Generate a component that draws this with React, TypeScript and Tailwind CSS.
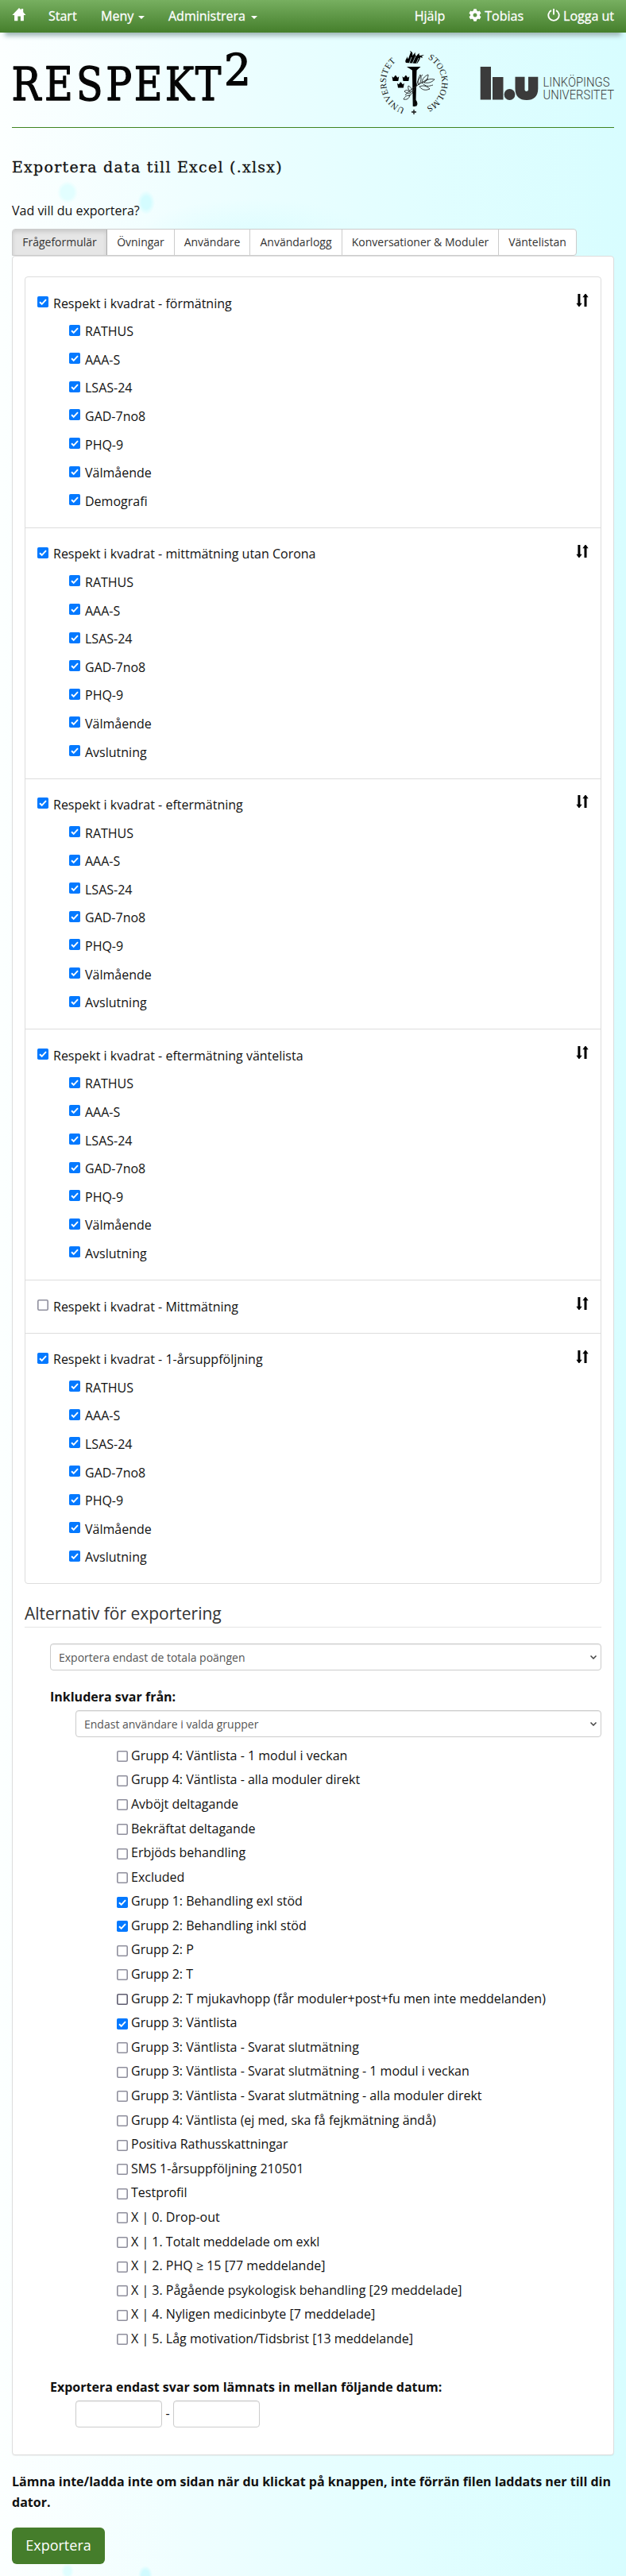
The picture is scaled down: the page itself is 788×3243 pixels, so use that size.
import React from "react";
import { FaCog } from "react-icons/fa";

function Box({ on, dark }: { on?: boolean; dark?: boolean }) {
  return (
    <svg role="checkbox" aria-checked={!!on} width="14" height="14" viewBox="0 0 14 14" className="block shrink-0">
      {on ? (
        <>
          <rect width="14" height="14" rx="1.8" fill="#0479ff" />
          <path d="M3 7.2l2.7 2.6L11 4.2" fill="none" stroke="#fff" strokeWidth="1.9" />
        </>
      ) : (
        <rect x="0.8" y="0.8" width="12.4" height="12.4" rx="1.4" fill="#fff" stroke={dark ? "#5f5d70" : "#8f8f9d"} strokeWidth="1.6" />
      )}
    </svg>
  );
}

function SortIcon() {
  return (
    <svg width="16" height="16" viewBox="0 0 16 16" fill="#000" className="block">
      <path d="M2.4 0h3v11.700h2.300L4.400 16h-1L.4 11.700h2zM10.500 16h3V4.300h2.200L12.500 0h-1L8.300 4.300h2.200z" />
    </svg>
  );
}

const base = ["RATHUS", "AAA-S", "LSAS-24", "GAD-7no8", "PHQ-9", "Välmående"];
const sections = [
  { name: "förmätning", items: [...base, "Demografi"] },
  { name: "mittmätning utan Corona", items: [...base, "Avslutning"] },
  { name: "eftermätning", items: [...base, "Avslutning"] },
  { name: "eftermätning väntelista", items: [...base, "Avslutning"] },
  { name: "Mittmätning", items: [] as string[] },
  { name: "1-årsuppföljning", items: [...base, "Avslutning"] },
];

const groups: [string, boolean?][] = [
  ["Grupp 4: Väntlista - 1 modul i veckan"],
  ["Grupp 4: Väntlista - alla moduler direkt"],
  ["Avböjt deltagande"],
  ["Bekräftat deltagande"],
  ["Erbjöds behandling"],
  ["Excluded"],
  ["Grupp 1: Behandling exl stöd", true],
  ["Grupp 2: Behandling inkl stöd", true],
  ["Grupp 2: P"],
  ["Grupp 2: T"],
  ["Grupp 2: T mjukavhopp (får moduler+post+fu men inte meddelanden)"],
  ["Grupp 3: Väntlista", true],
  ["Grupp 3: Väntlista - Svarat slutmätning"],
  ["Grupp 3: Väntlista - Svarat slutmätning - 1 modul i veckan"],
  ["Grupp 3: Väntlista - Svarat slutmätning - alla moduler direkt"],
  ["Grupp 4: Väntlista (ej med, ska få fejkmätning ändå)"],
  ["Positiva Rathusskattningar"],
  ["SMS 1-årsuppföljning 210501"],
  ["Testprofil"],
  ["X | 0. Drop-out"],
  ["X | 1. Totalt meddelade om exkl"],
  ["X | 2. PHQ ≥ 15 [77 meddelande]"],
  ["X | 3. Pågående psykologisk behandling [29 meddelade]"],
  ["X | 4. Nyligen medicinbyte [7 meddelade]"],
  ["X | 5. Låg motivation/Tidsbrist [13 meddelande]"],
];

function Navbar() {
  return (
    <nav className="flex h-[41px] items-center bg-linear-to-b from-[#77af60] to-[#457f2b] pl-[15px] text-[16px] leading-[25px] text-white shadow-[0_10px_6px_-6px_#9db5b5] [-webkit-text-stroke:0.3px_white]">
      <svg width="18" height="17" viewBox="0 0 18 17" fill="#fff" className="mt-[-4px]">
        <path d="M9 0l2.6 2.6V1h2.6v4.2L17.5 9h-2.6v7.3h-4V10.5H7.4v5.8H3.1V9H.4z" />
      </svg>
      <span className="ml-[28px] w-[66px]">Start</span>
      <span className="flex w-[85px] items-center">Meny<i className="ml-[6px] mt-[3px] border-x-4 border-t-4 border-x-transparent border-t-white" /></span>
      <span className="flex items-center">Administrera<i className="ml-[7px] mt-[3px] border-x-4 border-t-4 border-x-transparent border-t-white" /></span>
      <div className="ml-auto flex items-center pr-[15px]">
        <span className="mr-[30px]">Hjälp</span>
        <span className="mr-[30px] flex items-center"><FaCog size={16} className="mr-[4px] mt-[-3px]" />Tobias</span>
        <span className="flex items-center">
          <svg width="16" height="16" viewBox="0 0 16 16" fill="none" stroke="#fff" strokeWidth="1.9" className="mr-[4px] mt-[-3px]">
            <path d="M5 2.2a6.7 6.7 0 1 0 6 0M8 0v7.5" />
          </svg>
          Logga ut
        </span>
      </div>
    </nav>
  );
}

function Crown({ x, y }: { x: number; y: number }) {
  return (
    <path transform={`translate(${x} ${y})`} d="M0 1.2l2 1.5L3.9 0h.9l2 2.7 2-1.5-1 5.8H1z" fill="#000" />
  );
}

function Seal() {
  return (
    <svg width="96" height="106" viewBox="473 52 96 106" className="-mx-[5px] -mt-[11px]">
      <defs>
        <path id="arcL" d="M509.5 137.5A34.5 34.5 0 0 1 503 75" />
        <path id="arcR" d="M538.5 74.7A34.5 34.5 0 0 1 531 138" />
      </defs>
      <g fontFamily="'Liberation Serif', serif" fontSize="11" fill="#111">
        <text><textPath href="#arcL" textLength="73" lengthAdjust="spacing">UNIVERSITET</textPath></text>
        <text><textPath href="#arcR" textLength="75" lengthAdjust="spacing">STOCKHOLMS</textPath></text>
      </g>
      <path d="M512 85h17.500l-5 4.500-1.200 45.500h-3.600l-.8-45.500z" fill="#000" />
      <path d="M511 80c-2-3 1-5 2-8 0 2 0 3 1 3 1-3 2-6 3-8 0-1-1-1-1-2 3 1 4 3 3 6 2-1 2-3 4-4-1 2 0 4 1 5 1-2 2-3 4-4-1 2 0 3 1 3l5-1-3 2 1 2-3-1c0 3-2 5-4 8z" fill="#000" />
      <path d="M515 81l3-8M519 81l4-9M524 81l3-7" stroke="#dff" strokeWidth=".7" />
      <Crown x={493.500} y={96} />
      <Crown x={506.500} y={96} />
      <Crown x={500} y={104.500} />
      <g fill="none" stroke="#222" strokeWidth=".9">
        <path d="M510 121c6-8 18-14 29-21M514 122c4-2 7-5 9-12M524 110c1-6 3-10 8-15M527 108c-2-5 0-9 2-13 2 5 1 9-2 13zM531 106c0-5 3-9 8-11 0 5-3 9-8 11zM534 105c4-5 9-5 13-4-4 4-8 5-13 4zM528 110c4 5 8 5 13 3-4-4-8-5-13-3zM533 107c5 4 8 2 12 1M509 116c3-3 6-1 8 2-4 1-6 0-8-2zM508 126c2-4 4-5 8-5-1 4-4 6-8 5zM514 109c4 2 5 5 5 8-4-1-6-4-5-8z" />
      </g>
      <path d="M521 126c3 1 5 5 3 8-3-1-3-4-3-8M521 139v6M518 142h6" stroke="#111" strokeWidth="1.3" />
    </svg>
  );
}

function LiuLogo() {
  return (
    <svg width="180" height="64" viewBox="604 73 180 64">
      <g fill="#3b3b3b">
        <path d="M604.7 84H618v41.500h-13.300zM620 97h13.500v28.500H620z" />
        <circle cx="641.500" cy="119" r="6.900" />
        <path d="M648.500 96.700h12v16.500a2.300 2.300 0 0 0 4.500 0V96.700h12.300v15c0 9.500-5.500 14.300-14.400 14.300s-14.400-4.800-14.400-14.300z" />
        <g fontFamily="Roboto, sans-serif" fontWeight="300" fontSize="17">
          <text x="683.500" y="109" textLength="84" lengthAdjust="spacingAndGlyphs">LINKÖPINGS</text>
          <text x="683.500" y="125.300" textLength="89.500" lengthAdjust="spacingAndGlyphs">UNIVERSITET</text>
        </g>
      </g>
    </svg>
  );
}

function Wordmark() {
  return (
    <svg
      width="330"
      height="108"
      viewBox="10 42 330 108"
      fontFamily="'DejaVu Serif', serif"
      fill="#050505"
      stroke="#050505"
      strokeWidth="1.300"
      strokeLinejoin="round"
      className="-ml-[5px] -mt-[21px]"
    >
      <text transform="scale(.86 1)" x="17 65 111.500 155 196.300 241.500 285.700" y="127" fontSize="57">RESPEKT</text>
      <text transform="translate(282 107.500) scale(.97 1)" fontSize="55">2</text>
    </svg>
  );
}

function Select({ children }: { children: React.ReactNode }) {
  return (
    <div className="flex h-[34px] items-center justify-between rounded-[4px] border border-[#ccc] bg-white pl-[10px] pr-[5px] text-[14px] text-[#555] shadow-[inset_0_1px_1px_rgba(0,0,0,0.075)]">
      <span>{children}</span>
      <svg width="8" height="5" viewBox="0 0 8 5" fill="none" stroke="#444" strokeWidth="1.500"><path d="M.5.5L4 4 7.500.5" /></svg>
    </div>
  );
}

const tab = "flex items-center justify-center border-r border-[#ccc]";

export default function App() {
  return (
    <div className="h-[3243px] overflow-hidden bg-[#f0ffff] bg-[radial-gradient(13px_14px_at_85px_242px,#e2feff_60%,transparent_100%),radial-gradient(11px_15px_at_184px_255px,#d4fcff_50%,transparent_100%),radial-gradient(8px_10px_at_85px_3237px,#e0feff_50%,transparent_100%),radial-gradient(9px_12px_at_183px_3242px,#d0fbff_50%,transparent_100%),radial-gradient(150px_50px_at_320px_300px,#ddfdff,transparent),linear-gradient(90deg,#fcffff_0%,#effeff_30%,#e2feff_65%,#d8fdff_100%)] font-['Open_Sans','Noto_Sans',sans-serif] text-[16px] leading-[25.6px] text-[#111]">
      <Navbar />
      <div className="px-[15px]">
        <header className="flex h-[120px] justify-between border-b border-[#3f8420] pt-[21px]">
          <div className="w-[303px]"><Wordmark /></div>
          <div className="flex">
            <div className="w-[86px]"><Seal /></div>
            <div className="ml-[40px] mt-[11px] w-[169px]"><LiuLogo /></div>
          </div>
        </header>
        <h1 className="mt-[34px] h-[31px] whitespace-nowrap font-['DejaVu_Serif',serif] text-[19px] leading-[30px] tracking-[1.25px] [-webkit-text-stroke:0.3px_#111]">Exportera data till Excel (.xlsx)</h1>
        <p className="mt-[27px] h-[35px]">Vad vill du exportera?</p>
        <div className="flex h-[34px] w-[711px] rounded-t-[4px] rounded-br-[4px] border border-[#ccc] bg-white text-[14px] text-[#333]">
          <div className="flex w-[119px] items-center justify-center rounded-tl-[3px] border-r border-[#adadad] bg-[#e6e6e6] shadow-[inset_0_3px_5px_rgba(0,0,0,0.125)]">Frågeformulär</div>
          <div className={`${tab} w-[85px]`}>Övningar</div>
          <div className={`${tab} w-[95px]`}>Användare</div>
          <div className={`${tab} w-[116px]`}>Användarlogg</div>
          <div className={`${tab} w-[197px]`}>Konversationer &amp; Moduler</div>
          <div className="flex flex-1 items-center justify-center">Väntelistan</div>
        </div>
        <main className="h-[2769px] rounded-[4px] border border-[#ddd] bg-white px-[15px] pt-[25px] shadow-[0_1px_1px_rgba(0,0,0,0.05)]">
          <div className="rounded-[4px] border border-[#ddd]">
            {sections.map((s, i) => (
              <section key={s.name} className={i ? "border-t border-[#ddd] p-[15px]" : "p-[15px]"}>
                <div className="flex h-[35.600px] items-start justify-between pt-[5.600px]">
                  <label className="flex">
                    <span className="mr-[6px] mt-[3.400px]"><Box on={s.items.length > 0} /></span>Respekt i kvadrat - {s.name}
                  </label>
                  <span className="mt-[0.400px]"><SortIcon /></span>
                </div>
                {s.items.map((t) => (
                  <label key={t} className="ml-[40px] flex h-[35.600px] pt-[5.600px]">
                    <span className="mr-[6px] mt-[3.400px]"><Box on /></span>{t}
                  </label>
                ))}
              </section>
            ))}
          </div>
          <h2 className="mt-[24px] h-[31px] border-b border-[#e5e5e5] text-[21px] leading-[26px] text-[#333]">Alternativ för exportering</h2>
          <div className="ml-[32px] mt-[20px]">
            <Select>Exportera endast de totala poängen</Select>
            <p className="mt-[21px] h-[29px] font-bold">Inkludera svar från:</p>
            <div className="ml-[32px]">
              <Select>Endast användare i valda grupper</Select>
              <div className="ml-[52px] mt-[10.400px]">
                {groups.map(([t, on]) => (
                  <label key={t} className="flex h-[30.600px] whitespace-nowrap">
                    <span className="mr-[4px] mt-[6.400px]"><Box on={on} dark={t.includes("mjukavhopp")} /></span>{t}
                  </label>
                ))}
              </div>
            </div>
            <p className="mt-[30px] h-[29px] font-bold">Exportera endast svar som lämnats in mellan följande datum:</p>
            <div className="ml-[32px] flex items-center">
              <div className="h-[34px] w-[109px] rounded-[4px] border border-[#ccc] bg-white shadow-[inset_0_1px_1px_rgba(0,0,0,0.075)]" />
              <span className="w-[14px] text-center">-</span>
              <div className="h-[34px] w-[109px] rounded-[4px] border border-[#ccc] bg-white shadow-[inset_0_1px_1px_rgba(0,0,0,0.075)]" />
            </div>
          </div>
        </main>
        <p className="mt-[21px] font-bold">Lämna inte/ladda inte om sidan när du klickat på knappen, inte förrän filen laddats ner till din dator.</p>
        <button className="mt-[19px] h-[46px] w-[117px] rounded-[6px] bg-[#457d2b] text-[18px] text-white">Exportera</button>
      </div>
    </div>
  );
}
